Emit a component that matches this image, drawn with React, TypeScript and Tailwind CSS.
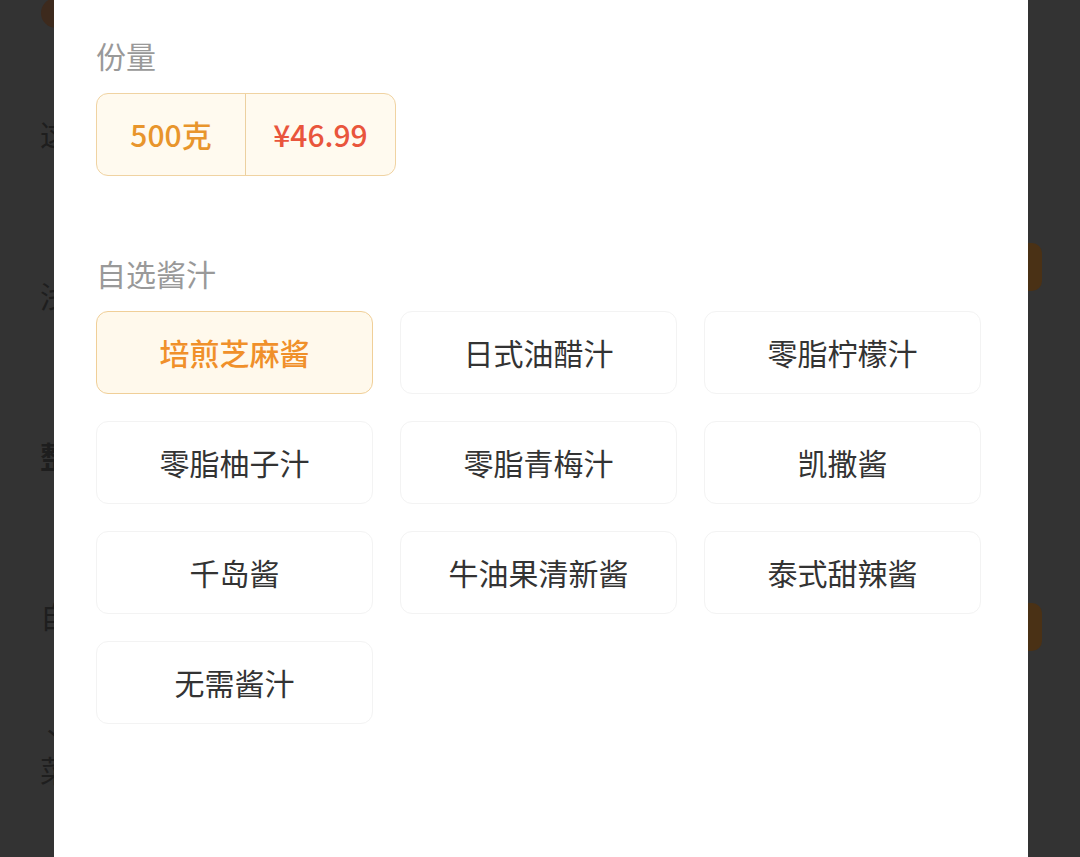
import React from 'react';

const font = { fontFamily: '"Noto Sans CJK SC", "Noto Sans", sans-serif' };

const sauces = [
    '培煎芝麻酱',
    '日式油醋汁',
    '零脂柠檬汁',
    '零脂柚子汁',
    '零脂青梅汁',
    '凯撒酱',
    '千岛酱',
    '牛油果清新酱',
    '泰式甜辣酱',
    '无需酱汁',
];

// dimmed page behind the sheet
const BackdropPage = () => (
    <div className="flex flex-col h-full pl-[40px] pr-[38px] text-[30px] leading-[40px] text-[#1e1e1e]">
        <div className="w-[30px] h-[30px] rounded-full bg-[#3d2a1d] -mt-[2px] ml-[1px]" />
        <div className="mt-[85px]">这</div>
        <div className="mt-[90px] flex items-start justify-between">
            <span className="mt-[32px]">浅</span>
            <div className="w-[62px] h-[48px] rounded-[10px] bg-[#4a3115]" />
        </div>
        <div className="mt-[120px] font-bold">整</div>
        <div className="mt-[120px] flex items-start justify-between">
            <span>自</span>
            <div className="w-[62px] h-[48px] rounded-[10px] bg-[#4a3115] mt-[8px]" />
        </div>
        <div className="mt-[67px] leading-[34px]">丶</div>
        <div className="leading-[34px]">菜</div>
    </div>
);

export default function App() {
    return (
        <div className="relative w-full h-[857px] bg-[#333333] overflow-hidden" style={font}>
            <BackdropPage />
            <div className="absolute top-0 bottom-0 left-[54px] w-[974px] bg-white pl-[42px] pt-[35px]">
                <div className="text-[30px] leading-[40px] text-[#999999]">份量</div>
                <div className="mt-[18px] flex w-[300px] h-[83px] rounded-[12px] border border-[#f0d3a2] bg-[#fffaef] text-[30px]">
                    <div className="w-[149px] flex items-center justify-center font-medium text-[#e8952c] border-r border-[#ecd0a0]">
                        500克
                    </div>
                    <div className="flex-1 flex items-center justify-center font-medium text-[#e9553c]">
                        ¥46.99
                    </div>
                </div>

                <div className="mt-[77px] text-[30px] leading-[40px] text-[#999999]">自选酱汁</div>
                <div className="mt-[18px] grid grid-cols-[277px_277px_277px] gap-x-[27px] gap-y-[27px]">
                    {sauces.map((s, i) =>
                        i === 0 ? (
                            <div
                                key={s}
                                className="h-[83px] rounded-[12px] border border-[#f0cf98] bg-[#fff9ec] flex items-center justify-center text-[30px] font-medium text-[#f0902a]"
                            >
                                {s}
                            </div>
                        ) : (
                            <div
                                key={s}
                                className="h-[83px] rounded-[12px] border border-[#f3f3f3] bg-white flex items-center justify-center text-[30px] text-[#333333]"
                            >
                                {s}
                            </div>
                        )
                    )}
                </div>
            </div>
        </div>
    );
}
